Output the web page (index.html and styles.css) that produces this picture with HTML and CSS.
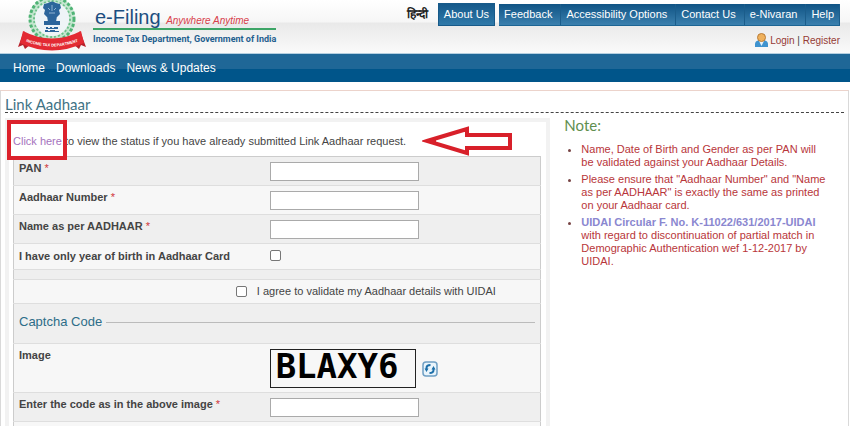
FILE: index.html
```
<!DOCTYPE html>
<html lang="en">
<head>
    <meta charset="UTF-8">
    <meta name="viewport" content="width=device-width, initial-scale=1.0">
    <title>Link Aadhaar - e-Filing</title>
    <link rel="stylesheet" href="styles.css">
</head>
<body>

    <header class="header">
        <div class="brand">
            <svg class="emblem" viewBox="0 0 72 54" width="72" height="54" aria-hidden="true">
                <!-- wreath -->
                <circle cx="34" cy="19" r="20" fill="none" stroke="#c4e6cf" stroke-width="6"/>
                <circle cx="34" cy="19" r="22" fill="none" stroke="#4fb375" stroke-width="3" stroke-dasharray="3 2"/>
                <circle cx="34" cy="19" r="18" fill="none" stroke="#6cc08b" stroke-width="2" stroke-dasharray="2 2"/>
                <circle cx="34" cy="19" r="17" fill="#eef4f7"/>
                <!-- lion capital -->
                <g fill="#2c659b">
                    <path d="M30 3q4-3 8 0l4 1 1 4-2 2 1 4-3 3H29l-3-3 1-4-2-2 1-4z"/>
                    <path d="M29 16h10l-1 6h-8z"/>
                    <path d="M26 21h16v4H26z"/>
                    <path d="M28 27h2v1h2v-1h2v1h2v-1h4v2H28z"/>
                    <path d="M27 30h3v1h2v-1h5v1h4v1H27z"/>
                </g>
                <path d="M30 8l2 2M38 8l-2 2M31 13h6M34 5v6" stroke="#8fb3d2" fill="none"/>
                <!-- ribbon -->
                <path d="M6 31L0 47l5-2 2 4 6-5zM62 31l6 16-5-2-2 4-6-5z" fill="#b8202a"/>
                <path d="M5 31Q34 46 63 31L66 43Q34 58 2 43z" fill="#e32a33"/>
                <path id="ribbonLine" d="M4 40Q34 53 64 40" fill="none"/>
                <text class="ribbon-text"><textPath href="#ribbonLine" startOffset="50%" text-anchor="middle">INCOME TAX DEPARTMENT</textPath></text>
            </svg>
            <div class="brand-text">
                <div class="brand-title">e-Filing <em>Anywhere Anytime</em></div>
                <div class="brand-dept">Income Tax Department, Government of India</div>
            </div>
        </div>
        <div class="header-links">
            <div class="top-menu">
                <a class="hindi" href="#" lang="hi">हिन्दी</a>
                <a class="about" href="#">About Us</a>
                <div class="menu-group">
                    <a href="#">Feedback</a>
                    <a href="#">Accessibility Options</a>
                    <a href="#">Contact Us</a>
                    <a href="#">e-Nivaran</a>
                    <a href="#">Help</a>
                </div>
            </div>
            <div class="login">
                <svg viewBox="0 0 13 14" width="13" height="14" aria-hidden="true">
                    <path d="M0 14V11q0-3 4-4h5q4 1 4 4v3z" fill="#3f93cf"/>
                    <path d="M4 8l2.500 5L9 8z" fill="#e4f1fa"/>
                    <circle cx="6.500" cy="4.500" r="4" fill="#efb15c" stroke="#b97c39"/>
                </svg>
                <span><a href="#">Login</a> | <a href="#">Register</a></span>
            </div>
        </div>
    </header>

    <nav class="nav">
        <a href="#">Home</a>
        <a href="#">Downloads</a>
        <a href="#">News &amp; Updates</a>
    </nav>

    <main class="content">
        <h1>Link Aadhaar</h1>
        <div class="columns">
            <form class="form-panel">
                <div class="intro">
                    <p><a class="highlight" href="#">Click here</a> to view the status if you have already submitted Link Aadhaar request.</p>
                    <svg viewBox="0 0 92 30" width="92" height="30" aria-hidden="true">
                        <path d="M5 15L45 3v6h43v13H45v5z" fill="none" stroke="#d8202a" stroke-width="4"/>
                        <path d="M2 15l12-4v8z" fill="#d8202a"/>
                    </svg>
                </div>
                <table>
                    <tbody>
                        <tr>
                            <th><label for="pan">PAN <span class="required">*</span></label></th>
                            <td><input type="text" id="pan" name="pan" required></td>
                        </tr>
                        <tr>
                            <th><label for="aadhaar">Aadhaar Number <span class="required">*</span></label></th>
                            <td><input type="text" id="aadhaar" name="aadhaar" required></td>
                        </tr>
                        <tr>
                            <th><label for="name">Name as per AADHAAR <span class="required">*</span></label></th>
                            <td><input type="text" id="name" name="name" required></td>
                        </tr>
                        <tr class="check-row">
                            <th><label for="yearOnly">I have only year of birth in Aadhaar Card</label></th>
                            <td><input type="checkbox" id="yearOnly" name="yearOnly"></td>
                        </tr>
                        <tr class="spacer">
                            <td colspan="2"></td>
                        </tr>
                        <tr class="agree">
                            <td colspan="2">
                                <div class="agree-line">
                                    <input type="checkbox" id="agree" name="agree">
                                    <label for="agree">I agree to validate my Aadhaar details with UIDAI</label>
                                </div>
                            </td>
                        </tr>
                        <tr class="section">
                            <td colspan="2"><h2>Captcha Code</h2></td>
                        </tr>
                        <tr class="captcha-row">
                            <th>Image</th>
                            <td>
                                <div class="captcha">
                                    <span class="captcha-code">BLAXY6</span>
                                    <button type="button" class="refresh" aria-label="Refresh captcha">
                                        <svg viewBox="0 0 16 16" width="16" height="16">
                                            <rect x="1" y="1" width="14" height="14" rx="3" fill="#e9f4fb" stroke="#6f9fc4" stroke-width="1.500"/>
                                            <path d="M4.500 8.500V7q0-3 4-3M11.500 7.500V9q0 3-4 3" fill="none" stroke="#1d6fa9" stroke-width="2"/>
                                            <path d="M2.500 7.500h4L4.500 11zM13.500 8.500h-4L11.500 5z" fill="#1d6fa9"/>
                                        </svg>
                                    </button>
                                </div>
                            </td>
                        </tr>
                        <tr>
                            <th><label for="code">Enter the code as in the above image <span class="required">*</span></label></th>
                            <td><input type="text" id="code" name="code" required></td>
                        </tr>
                        <tr class="spacer">
                            <td colspan="2"></td>
                        </tr>
                    </tbody>
                </table>
            </form>

            <aside class="note">
                <h2>Note:</h2>
                <ul>
                    <li>Name, Date of Birth and Gender as per PAN will be validated against your Aadhaar Details.</li>
                    <li>Please ensure that "Aadhaar Number" and "Name as per AADHAAR" is exactly the same as printed on your Aadhaar card.</li>
                    <li><a href="#">UIDAI Circular F. No. K-11022/631/2017-UIDAI</a> with regard to discontinuation of partial match in Demographic Authentication wef 1-12-2017 by UIDAI.</li>
                </ul>
            </aside>
        </div>
    </main>

</body>
</html>
```
FILE: styles.css
```
* {
    box-sizing: border-box;
}
body {
    font-family: "Liberation Sans", Arial, sans-serif;
    font-size: 11px;
    line-height: 13px;
    color: #444;
    background-color: #fff;
    margin: 0;
    overflow: hidden;
}
a {
    text-decoration: none;
}
.header {
    display: flex;
    justify-content: space-between;
    height: 54px;
    padding: 0 10px 0 18px;
    background: linear-gradient(#fff 0, #f6f6f6 22px, #e9e9e9 23px, #fafafa 100%);
    border-bottom: 1px solid #b5cfe0;
}
.brand {
    display: flex;
    gap: 3px;
}
.emblem {
    flex: none;
}
.ribbon-text {
    font-size: 4px;
    font-weight: bold;
    fill: #fff;
}
.brand-text {
    padding-top: 6px;
}
.brand-title {
    padding-left: 2px;
    font-size: 20px;
    line-height: 22px;
    color: #1c4e80;
    border-bottom: 2px solid #3da566;
    white-space: nowrap;
}
.brand-title em {
    font-size: 10px;
    line-height: 10px;
    color: #d8404a;
}
.brand-dept {
    font-family: Roboto, "Liberation Sans", sans-serif;
    font-size: 9px;
    font-weight: bold;
    line-height: 18px;
    color: #1f5f8f;
    white-space: nowrap;
}
.header-links {
    display: flex;
    flex-direction: column;
    align-items: flex-end;
    gap: 7px;
    padding-top: 3px;
}
.top-menu {
    display: flex;
    align-items: flex-end;
    white-space: nowrap;
}
.top-menu a {
    color: #fff;
}
.top-menu .hindi {
    align-self: center;
    margin-right: 10px;
    font-size: 12px;
    font-weight: bold;
    color: #222;
}
.top-menu .about {
    margin-right: 4px;
    padding: 4px 5px;
    border: 1px solid #175a89;
    background: linear-gradient(#15598a, #2f79a9);
}
.menu-group {
    display: flex;
    background: linear-gradient(#0f5384, #3b80ae);
    border-bottom: 1px solid #1c6594;
}
.menu-group a {
    padding: 4px 8px 4px 5px;
    border-right: 1px solid #1b5d8b;
}
.menu-group a:last-child {
    padding-right: 5px;
}
.login {
    display: flex;
    align-items: center;
    gap: 2px;
    font-size: 10px;
}
.login a {
    color: #963b35;
}
.nav {
    display: flex;
    gap: 11px;
    height: 28px;
    padding: 0 13px;
    align-items: center;
    font-size: 12px;
    background: linear-gradient(#1f6797 0, #1f6797 15px, #00558a 15px, #00558a 100%);
}
.nav a {
    color: #fff;
}
.content {
    margin: 8px 1px 0 0;
    padding: 6px 4px 0;
    border: 1px solid #d9d9d9;
    border-top-color: #ecd3cb;
}
h1 {
    margin: 0;
    padding-bottom: 1px;
    font-family: Lato, "Liberation Sans", sans-serif;
    font-size: 15px;
    font-weight: normal;
    line-height: 14px;
    color: #3f7385;
    border-bottom: 1px dashed #444;
}
.columns {
    display: flex;
    align-items: stretch;
    margin-top: 5px;
}
.form-panel {
    width: 65%;
    padding: 0 5px 0 4px;
    border: 4px solid #f2f2f2;
    border-bottom: none;
}
.intro {
    display: flex;
    align-items: center;
    gap: 16px;
    height: 34px;
    padding-top: 4px;
}
.intro p {
    margin: 0;
    white-space: nowrap;
}
.intro a {
    color: #a573bd;
}
.highlight {
    position: relative;
}
.highlight::after {
    content: "";
    position: absolute;
    inset: -15px -5px -13px -6px;
    border: 4px solid #dc222c;
}
table {
    width: 100%;
    table-layout: fixed;
    border-collapse: collapse;
    border: 1px solid #ccc;
}
tr {
    background-color: #f7f7f7;
}
tr:nth-child(odd) {
    background-color: #efefef;
}
th, td {
    padding: 5px 5px 4px;
    text-align: left;
    vertical-align: top;
    border-bottom: 1px solid #dedede;
}
th {
    width: 48%;
    color: #444;
}
th + td {
    padding-left: 3px;
}
.required {
    color: #d0353a;
    font-weight: normal;
}
input[type="text"] {
    display: block;
    width: 149px;
    height: 19px;
    padding: 1px 3px;
    font: inherit;
    border: 1px solid #aaa;
    background-color: #fff;
}
input[type="checkbox"] {
    display: block;
    flex: none;
    appearance: none;
    width: 11px;
    height: 11px;
    margin: 0;
    background-color: #fff;
    border: 1px solid #777;
    border-radius: 2px;
}
.check-row th,
.check-row td {
    padding-top: 6px;
    padding-bottom: 6px;
}
.spacer td {
    padding: 0;
    height: 10px;
}
.agree td {
    padding-bottom: 5px;
}
.agree-line {
    display: flex;
    align-items: center;
    gap: 10px;
    padding-left: 42%;
}
.section h2 {
    display: flex;
    align-items: center;
    gap: 4px;
    margin: 0;
    padding: 6px 0 10px;
    font-size: 13px;
    font-weight: normal;
    line-height: 14px;
    color: #2d6d88;
}
.section h2::after {
    content: "";
    flex: 1;
    height: 1px;
    background-color: #bbb;
}
.captcha {
    display: flex;
    align-items: center;
    gap: 6px;
}
.captcha-code {
    width: 146px;
    height: 39px;
    padding-left: 5px;
    border: 1px solid #222;
    font-family: "DejaVu Sans Mono", monospace;
    font-size: 34px;
    font-weight: bold;
    line-height: 33px;
    color: #000;
}
.refresh {
    display: flex;
    padding: 0;
    border: none;
    background: none;
    cursor: pointer;
}
.note {
    flex: 1;
    padding: 0 16px 0 14px;
}
.note h2 {
    margin: 0;
    font-family: Lato, "Liberation Sans", sans-serif;
    font-size: 15px;
    font-weight: normal;
    line-height: 14px;
    color: #5f8f4f;
}
.note ul {
    margin: 11px 0 0;
    padding-left: 17px;
    color: #b8363a;
}
.note li {
    margin-bottom: 4px;
}
.note li::marker {
    color: #744;
}
.note a {
    font-weight: bold;
    color: #8a87d0;
}
```
